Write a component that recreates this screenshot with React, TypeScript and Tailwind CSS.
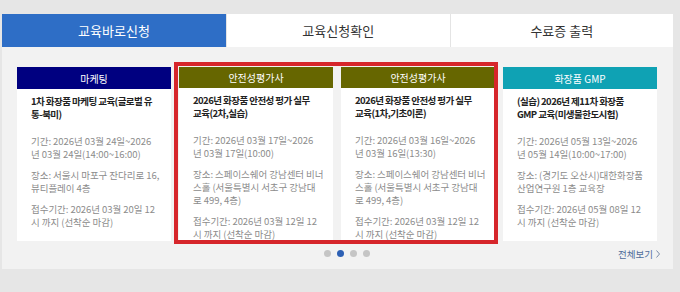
import React from "react";

type Course = {
  category: string;
  color: string;
  title: string[];
  period: string[];
  place: string[];
  deadline: string[];
};

// lines are split the way the original page wraps them
const courses: Course[] = [
  {
    category: "마케팅",
    color: "bg-[#000080]",
    title: ["1차 화장품 마케팅 교육(글로벌 유", "통-북미)"],
    period: ["기간: 2026년 03월 24일~2026", "년 03월 24일(14:00~16:00)"],
    place: ["장소: 서울시 마포구 잔다리로 16,", "뷰티플레이 4층"],
    deadline: ["접수기간: 2026년 03월 20일 12", "시 까지 (선착순 마감)"],
  },
  {
    category: "안전성평가사",
    color: "bg-[#666600]",
    title: ["2026년 화장품 안전성 평가 실무", "교육(2차,실습)"],
    period: ["기간: 2026년 03월 17일~2026", "년 03월 17일(10:00)"],
    place: ["장소: 스페이스쉐어 강남센터 비너", "스홀 (서울특별시 서초구 강남대", "로 499, 4층)"],
    deadline: ["접수기간: 2026년 03월 12일 12", "시 까지 (선착순 마감)"],
  },
  {
    category: "안전성평가사",
    color: "bg-[#666600]",
    title: ["2026년 화장품 안전성 평가 실무", "교육(1차,기초이론)"],
    period: ["기간: 2026년 03월 16일~2026", "년 03월 16일(13:30)"],
    place: ["장소: 스페이스쉐어 강남센터 비너", "스홀 (서울특별시 서초구 강남대", "로 499, 4층)"],
    deadline: ["접수기간: 2026년 03월 12일 12", "시 까지 (선착순 마감)"],
  },
  {
    category: "화장품 GMP",
    color: "bg-[#0fa2b4]",
    title: ["(실습) 2026년 제11차 화장품", "GMP 교육(미생물한도시험)"],
    period: ["기간: 2026년 05월 13일~2026", "년 05월 14일(10:00~17:00)"],
    place: ["장소: (경기도 오산시)대한화장품", "산업연구원 1층 교육장"],
    deadline: ["접수기간: 2026년 05월 08일 12", "시 까지 (선착순 마감)"],
  },
];

const tabs = ["교육바로신청", "교육신청확인", "수료증 출력"];

function Lines({ lines }: { lines: string[] }) {
  return (
    <p>
      {lines.map((l, i) => (
        <span key={i} className="block whitespace-nowrap">
          {l}
        </span>
      ))}
    </p>
  );
}

function CourseCard({ c }: { c: Course }) {
  return (
    <div className="w-[154px] h-[174px] bg-white flex flex-col overflow-hidden shrink-0">
      <div className={`${c.color} h-[22px] flex items-center justify-center text-white text-[10px]`}>
        {c.category}
      </div>
      <div className="px-[14px] pt-[6px]">
        <div className="text-[9.5px] leading-[13px] font-bold text-[#222] tracking-[-0.55px]">
          <Lines lines={c.title} />
        </div>
        <div className="mt-[14px] flex flex-col gap-[8px] text-[9.5px] leading-[13px] text-[#8c8c8c] tracking-[-0.05px]">
          <Lines lines={c.period} />
          <Lines lines={c.place} />
          <Lines lines={c.deadline} />
        </div>
      </div>
    </div>
  );
}

export default function App() {
  return (
    <div
      className="w-[680px] h-[292px] bg-[#e6e6e6] pt-[14px] pl-[2px]"
      style={{ fontFamily: '"Noto Sans CJK KR", "Noto Sans", sans-serif' }}
    >
      <div className="w-[671px]">
        <div className="flex h-[33px] bg-white">
          {tabs.map((t, i) => (
            <div
              key={t}
              className={
                i === 0
                  ? "w-[224px] bg-[#2e6ec6] text-white flex items-center justify-center text-[13px]"
                  : "flex-1 border-l border-[#e4e4e4] text-[#333] flex items-center justify-center text-[13px]"
              }
            >
              {t}
            </div>
          ))}
        </div>
        <div className="relative bg-[#f2f2f2] h-[222px] pt-[20px] pl-[15px]">
          <div className="flex gap-[8px]">
            {courses.map((c, i) => (
              <CourseCard key={i} c={c} />
            ))}
          </div>
          <div className="flex items-center mt-[9px] relative">
            <div className="flex gap-[6px] mx-auto pl-[3px]">
              <span className="w-[7px] h-[7px] rounded-full bg-[#c5c5c5]" />
              <span className="w-[7px] h-[7px] rounded-full bg-[#2d60b4]" />
              <span className="w-[7px] h-[7px] rounded-full bg-[#c5c5c5]" />
              <span className="w-[7px] h-[7px] rounded-full bg-[#c5c5c5]" />
            </div>
            <span className="absolute right-[13px] -top-[3px] flex items-center gap-[3px] text-[9.5px] text-[#4f6d9a]">
              전체보기
              <svg width="4" height="8" viewBox="0 0 4 8" fill="none">
                <path d="M0.5 0.5 L3.5 4 L0.5 7.5" stroke="#7a8ca8" strokeWidth="1" />
              </svg>
            </span>
          </div>
          <div className="absolute left-[172px] top-[15px] w-[324px] h-[182px] border-[4px] border-[#d6262b] pointer-events-none" />
        </div>
      </div>
    </div>
  );
}
